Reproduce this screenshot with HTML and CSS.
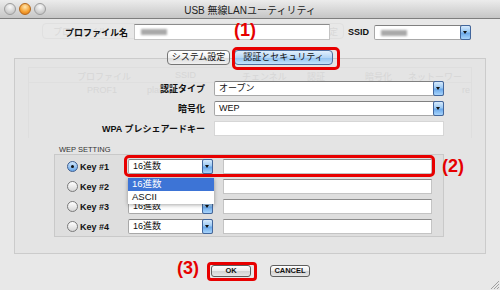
FILE: index.html
```html
<!DOCTYPE html>
<html lang="ja">
<head>
  <meta charset="UTF-8" />
  <title>USB 無線LANユーティリティ</title>
  <link rel="stylesheet" href="styles.css">
</head>
<body>

<div class="window">
  <div class="titlebar">
    <div class="lights">
      <span class="light"></span>
      <span class="light mini"></span>
      <span class="light"></span>
    </div>
    <div class="title">USB 無線LANユーティリティ</div>
    <div></div>
  </div>

  <!-- faded dialog behind the sheet -->
  <div class="ghost-tabs">
    <span class="gt-1">プロファイル</span>
    <span class="gt-2">統計</span>
    <span class="gt-3">高度な設定</span>
  </div>

  <div class="top-row">
    <label class="lbl name-lbl">プロファイル名</label>
    <div class="field name-field"><span class="blur"></span></div>
    <label class="lbl ssid-lbl">SSID</label>
    <div class="select ssid-select"><span class="blur"></span><span class="arrow"></span></div>
  </div>

  <div class="tabs">
    <button class="tab">システム設定</button>
    <button class="tab active">認証とセキュリティ<span class="mark mark-1">(1)</span></button>
  </div>

  <div class="panel">
    <div class="ghost-table">
      <div class="gh-head">
        <span style="left:48px">プロファイル</span>
        <span style="left:146px">SSID</span>
        <span style="left:213px">チェンネル</span>
        <span style="left:278px">認証</span>
        <span style="left:336px">暗号化</span>
        <span style="left:379px">ネットーワークタ</span>
      </div>
      <div class="gh-row">
        <span style="left:58px">PROF1</span>
        <span style="left:118px">plan</span>
        <span style="left:433px">re</span>
      </div>
    </div>

    <div class="form-row">
      <label class="lbl">認証タイプ</label>
      <div class="select wide">オープン<span class="arrow"></span></div>
    </div>
    <div class="form-row">
      <label class="lbl">暗号化</label>
      <div class="select wide">WEP<span class="arrow"></span></div>
    </div>
    <div class="form-row">
      <label class="lbl">WPA プレシェアードキー</label>
      <div class="field wide pale"></div>
    </div>

    <div class="wep-title">WEP SETTING</div>
    <div class="wep-box">
      <div class="key-row">
        <span class="radio on"></span>
        <label class="key-lbl">Key #1</label>
        <div class="key-fields marked">
          <div class="select key-select">16進数<span class="arrow"></span>
            <div class="popup">
              <div class="opt hl">16進数</div>
              <div class="opt">ASCII</div>
            </div>
          </div>
          <div class="field key-input"></div>
          <span class="mark mark-2">(2)</span>
        </div>
      </div>
      <div class="key-row">
        <span class="radio"></span>
        <label class="key-lbl">Key #2</label>
        <div class="key-fields">
          <div class="select key-select">16進数<span class="arrow"></span></div>
          <div class="field key-input"></div>
        </div>
      </div>
      <div class="key-row">
        <span class="radio"></span>
        <label class="key-lbl">Key #3</label>
        <div class="key-fields">
          <div class="select key-select">16進数<span class="arrow"></span></div>
          <div class="field key-input"></div>
        </div>
      </div>
      <div class="key-row">
        <span class="radio"></span>
        <label class="key-lbl">Key #4</label>
        <div class="key-fields">
          <div class="select key-select">16進数<span class="arrow"></span></div>
          <div class="field key-input"></div>
        </div>
      </div>
    </div>
  </div>

  <div class="actions">
    <button class="btn ok">OK<span class="mark mark-3">(3)</span></button>
    <button class="btn">CANCEL</button>
  </div>

  <svg class="grip" width="10" height="10" viewBox="0 0 10 10">
    <path d="M2 10 L10 2 M5 10 L10 5 M8 10 L10 8" stroke="#a0a0a0" stroke-width="1"/>
  </svg>
</div>

</body>
</html>
```

FILE: styles.css
```css
body {
  margin: 0;
  font-family: "Liberation Sans", "Noto Sans CJK JP", sans-serif;
  font-size: 9px;
  color: #111;
  background: #e8e8e8;
}
.window {
  position: relative;
  width: 500px;
  height: 290px;
  overflow: hidden;
  background: #e8e8e8;
}
.titlebar {
  height: 19px;
  box-sizing: border-box;
  display: grid;
  grid-template-columns: 1fr auto 1fr;
  align-items: center;
  background: linear-gradient(#ececec, #c6c6c6);
  border-bottom: 1px solid #7e7e7e;
}
.lights {
  display: flex;
  gap: 3px;
  padding-left: 4px;
}
.light {
  width: 10px;
  height: 10px;
  border-radius: 50%;
  border: 1px solid #9c9c9c;
  background: radial-gradient(circle at 50% 30%, #fafafa, #c9c9c9 70%);
}
.light.mini {
  border-color: #b4671a;
  background: radial-gradient(circle at 50% 30%, #ffe7b0, #f49d2e 60%, #d9761a);
}
.title {
  font-size: 10px;
  color: #222;
}

.ghost-tabs {
  position: absolute;
  left: 42px;
  top: 23px;
  width: 300px;
  height: 14px;
  border: 1px solid #e0e0e0;
  border-radius: 4px;
  color: #d8d8d8;
  font-size: 9px;
}
.ghost-tabs span {
  position: absolute;
  top: 1px;
}
.gt-1 { left: 10px; }
.gt-2 { left: 222px; }
.gt-3 { left: 250px; }

.lbl {
  font-weight: bold;
  white-space: nowrap;
}
.top-row {
  position: relative;
  display: flex;
  align-items: center;
  margin-top: 5px;
  height: 16px;
}
.name-lbl {
  width: 128px;
  text-align: right;
}
.field {
  box-sizing: border-box;
  background: #fff;
  border: 1px solid #c4c4c4;
  border-top-color: #8c8c8c;
}
.field.pale {
  border-color: #d6d6d6;
}
.name-field {
  width: 196px;
  height: 16px;
  margin-left: 6px;
  position: relative;
}
.blur {
  position: absolute;
  left: 6px;
  top: 4px;
  width: 26px;
  height: 6px;
  background: #a9a9a9;
  filter: blur(1.2px);
}
.ssid-lbl {
  margin-left: 18px;
}
.select {
  position: relative;
  box-sizing: border-box;
  height: 15px;
  line-height: 13px;
  padding-left: 4px;
  background: #fff;
  border: 1px solid #a8a8a8;
  border-top-color: #808080;
  border-radius: 2px;
}
.ssid-select {
  width: 97px;
  height: 15px;
  margin-left: 5px;
}
.arrow {
  position: absolute;
  right: -1px;
  top: -1px;
  bottom: -1px;
  width: 11px;
  box-sizing: border-box;
  border: 1px solid #42669c;
  border-radius: 2px;
  background: linear-gradient(#d6eafc, #9ac8f3 45%, #6aa8ea 55%, #a8d4fb);
}
.arrow::after {
  content: "";
  position: absolute;
  left: 2px;
  top: 5px;
  border-left: 2.5px solid transparent;
  border-right: 2.5px solid transparent;
  border-top: 3px solid #111;
}

.tabs {
  position: relative;
  z-index: 2;
  display: flex;
  justify-content: center;
  gap: 4px;
  margin-top: 10px;
}
.tab {
  position: relative;
  height: 15px;
  padding: 0;
  font-family: inherit;
  font-size: 9px;
  line-height: 13px;
  color: #111;
  border: 1px solid #767676;
  border-radius: 4px;
  background: linear-gradient(#ffffff, #f2f2f2 50%, #dcdcdc 51%, #f0f0f0);
  width: 63px;
}
.tab.active {
  width: 99px;
  border-color: #4f6f9e;
  background: linear-gradient(#e2f0fd, #b5d7f6 50%, #8fc0ef 51%, #c4e4fc);
}
.tab.active::after {
  content: "";
  position: absolute;
  top: -4px;
  left: -3px;
  right: -8px;
  bottom: -6px;
  border: 3px solid #e80000;
  border-radius: 5px;
}
.mark {
  position: absolute;
  font-family: "Liberation Sans", sans-serif;
  font-size: 18px;
  font-weight: bold;
  line-height: 18px;
  color: #e60000;
  white-space: nowrap;
}
.mark-1 {
  left: -1px;
  bottom: calc(100% + 12px);
}

.panel {
  position: relative;
  margin: -7px 14px 0;
  height: 196px;
  box-sizing: border-box;
  padding-top: 22px;
  border: 1px solid #cbcbcb;
  background: #e4e4e4;
}
.ghost-table {
  position: absolute;
  left: 13px;
  top: 8px;
  width: 442px;
  height: 70px;
  border: 1px solid #dedede;
  border-bottom: none;
  color: #d6d6d6;
}
.gh-head, .gh-row {
  position: relative;
  height: 14px;
}
.gh-head {
  border-bottom: 1px solid #dfdfdf;
}
.ghost-table span {
  position: absolute;
  top: 2px;
}
.form-row {
  position: relative;
  display: flex;
  align-items: center;
  gap: 9px;
  margin-bottom: 5px;
}
.form-row .lbl {
  width: 190px;
  text-align: right;
}
.wide {
  width: 230px;
  height: 15px;
}
.wep-title {
  margin: 9px 0 0 44px;
  font-size: 7.5px;
  line-height: 9px;
  color: #333;
}
.wep-box {
  margin-left: 39px;
  width: 390px;
  box-sizing: border-box;
  padding: 4px 0 2px;
  border: 1px solid #c9c9c9;
  background: #dedede;
}
.key-row {
  display: flex;
  align-items: center;
  height: 15px;
  margin-bottom: 5px;
}
.key-row:last-child {
  margin-bottom: 0;
}
.radio {
  width: 11px;
  height: 11px;
  box-sizing: border-box;
  margin-left: 12px;
  border-radius: 50%;
  border: 1px solid #7a7a7a;
  background: linear-gradient(#ffffff, #d6d6d6);
}
.radio.on {
  position: relative;
  border-color: #3c5d90;
  background: linear-gradient(#cfe6fc, #6aa8ea);
}
.radio.on::after {
  content: "";
  position: absolute;
  left: 3px;
  top: 3px;
  width: 3px;
  height: 3px;
  border-radius: 50%;
  background: #111;
}
.key-lbl {
  width: 48px;
  margin-left: 2px;
  font-weight: bold;
}
.key-fields {
  position: relative;
  display: flex;
  gap: 10px;
}
.key-fields.marked::after {
  content: "";
  position: absolute;
  top: -4px;
  left: -4px;
  right: -3px;
  bottom: -3px;
  border: 3px solid #e80000;
  border-radius: 5px;
}
.key-select {
  width: 85px;
}
.key-input {
  width: 209px;
  height: 15px;
}
.mark-2 {
  left: calc(100% + 10px);
  top: -2px;
}
.popup {
  position: absolute;
  z-index: 5;
  left: -1px;
  top: 18px;
  width: 86px;
  background: #fff;
  box-shadow: 0 1px 4px rgba(0, 0, 0, 0.35);
}
.opt {
  height: 12px;
  line-height: 12px;
  padding: 0 2px 1px 4px;
  font-size: 9.5px;
}
.opt.hl {
  background: #3d74d6;
  color: #fff;
}

.actions {
  display: flex;
  gap: 19px;
  margin-top: 11px;
  padding-left: 211px;
}
.btn {
  position: relative;
  width: 40px;
  height: 12px;
  padding: 0;
  font-family: inherit;
  font-size: 7.5px;
  font-weight: bold;
  line-height: 10px;
  color: #111;
  border: 1px solid #5e5e5e;
  border-radius: 3px;
  background: linear-gradient(#ffffff, #ececec 50%, #d2d2d2 51%, #e6e6e6);
}
.btn.ok::after {
  content: "";
  position: absolute;
  top: -4px;
  left: -5px;
  right: -7px;
  bottom: -5px;
  border: 3px solid #e80000;
  border-radius: 4px;
}
.mark-3 {
  right: calc(100% + 13px);
  top: -7px;
}
.grip {
  position: absolute;
  right: 1px;
  bottom: 1px;
}
```
